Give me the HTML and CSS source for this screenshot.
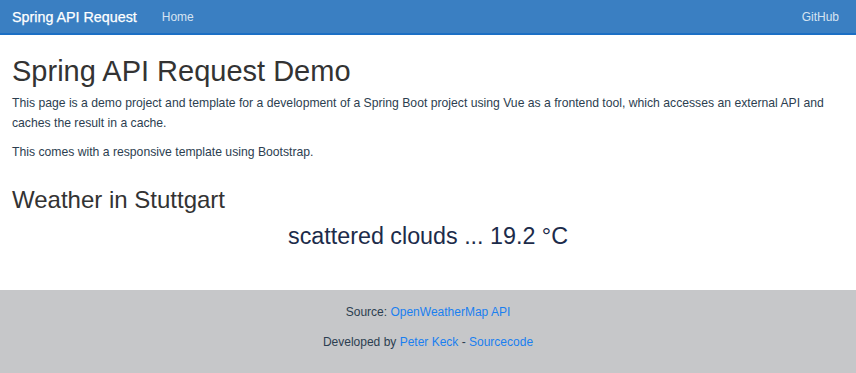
FILE: index.html
```html
<!DOCTYPE html>
<html lang="en">
<head>
<meta charset="utf-8">
<title>Spring API Request</title>
<link rel="stylesheet" href="styles.css">
</head>
<body>
<nav class="navbar">
  <div class="nav-left">
    <a class="brand" href="#">Spring API Request</a>
    <a class="nav-link" href="#">Home</a>
  </div>
  <a class="nav-link" href="#">GitHub</a>
</nav>
<main class="content">
  <h1 class="title">Spring API Request Demo</h1>
  <p class="text">This page is a demo project and template for a development of a Spring Boot project using Vue as a frontend tool, which accesses an external API and caches the result in a cache.</p>
  <p class="text">This comes with a responsive template using Bootstrap.</p>
  <h2 class="subtitle">Weather in Stuttgart</h2>
  <p class="weather">scattered clouds ... 19.2 °C</p>
</main>
<footer class="footer">
  <p class="foot-line">Source: <a href="#">OpenWeatherMap API</a></p>
  <p class="foot-line">Developed by <a href="#">Peter Keck</a> - <a href="#">Sourcecode</a></p>
</footer>
</body>
</html>
```
FILE: styles.css
```css
* { box-sizing: border-box; }
html, body { margin: 0; padding: 0; }
body {
  font-family: "Liberation Sans", Arial, sans-serif;
  color: #2c3e50;
  background: #fff;
  font-size: 12px;
  line-height: 20px;
  height: 373px;
  display: flex;
  flex-direction: column;
}
a { text-decoration: none; }
.navbar {
  background: #3a7fc2;
  border-bottom: 2px solid #1b6fc4;
  height: 35px;
  flex: none;
  display: flex;
  align-items: center;
  justify-content: space-between;
  padding: 0 17px 0 12px;
}
.nav-left { display: flex; align-items: center; gap: 25px; }
.brand { color: #fff; font-size: 14.3px; -webkit-text-stroke: 0.25px #fff; }
.nav-link { color: rgba(255,255,255,0.8); font-size: 12px; }
.content { padding: 0 12px; flex: 1; }
.title {
  font-size: 29px;
  font-weight: 400;
  color: #333;
  margin: 19px 0 5px;
  line-height: 34px;
}
.text { margin: 0 0 9px; font-size: 12.2px; }
.subtitle {
  font-size: 24px;
  font-weight: 400;
  color: #333;
  margin: 23px 0 7px;
  line-height: 29px;
}
.weather {
  text-align: center;
  font-size: 23.3px;
  line-height: 30px;
  margin: 0;
  color: #1c2b4a;
}
.footer {
  background: #c6c7c9;
  height: 83px;
  flex: none;
  padding-top: 12px;
  text-align: center;
}
.foot-line { margin: 0 0 10px; }
.footer a { color: #1a7ff0; }
```
